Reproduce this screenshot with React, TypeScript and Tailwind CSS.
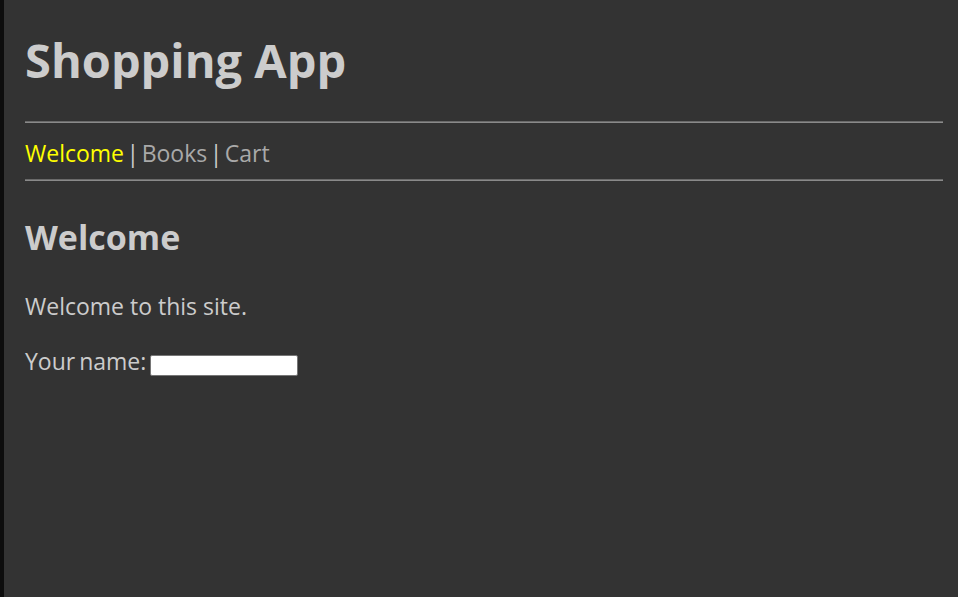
import React from "react";

export default function App() {
  return (
    <div
      className="flex min-h-[597px] w-full bg-[#333333] text-[#cccccc]"
      style={{ fontFamily: '"Open Sans", "Noto Sans", sans-serif' }}
    >
      <div className="w-[4px] shrink-0 bg-[#0d0d0d]" />
      <div className="flex flex-1 flex-col pl-[21px] pr-[15px]">
        <h1 className="mt-[34px] text-[47px] font-bold leading-[52px]">Shopping App</h1>
        <div className="mt-[35px] h-[2px] border-t border-b border-t-[#6a6a6a] border-b-[#8a8a8a]" />
        <nav className="mt-[15px] text-[23px] leading-[30px] [word-spacing:-3.5px]">
          <a className="text-[#ffff00]">Welcome</a>
          <span> | </span>
          <a className="text-[#a9a9a9]">Books</a>
          <span> | </span>
          <a className="text-[#a9a9a9]">Cart</a>
        </nav>
        <div className="mt-[11px] h-[2px] border-t border-b border-t-[#6a6a6a] border-b-[#8a8a8a]" />
        <h2 className="mt-[36px] text-[34px] font-bold leading-[40px]">Welcome</h2>
        <p className="mt-[34px] text-[23px] leading-[30px]">Welcome to this site.</p>
        <div className="mt-[25px] flex items-start text-[23px] leading-[30px]">
          <span className="[word-spacing:-2px]">Your name:</span>
          <input
            type="text"
            className="ml-[4px] mt-[9px] h-[21px] w-[148px] rounded-[2px] border border-[#767676] bg-white outline-none"
          />
        </div>
      </div>
    </div>
  );
}
